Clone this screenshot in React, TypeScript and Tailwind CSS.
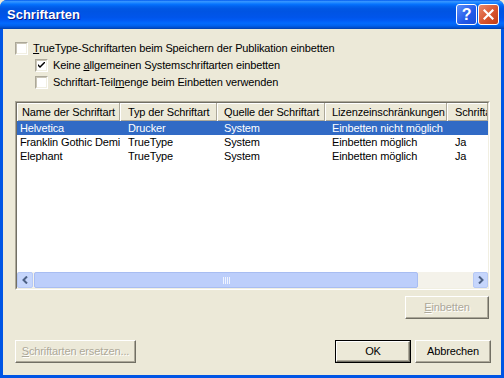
import React from 'react';

const font = "font-['Liberation_Sans',Arial,sans-serif]";

type Row = { name: string; typ: string; quelle: string; lizenz: string; sub: string; selected?: boolean };

const rows: Row[] = [
  { name: 'Helvetica', typ: 'Drucker', quelle: 'System', lizenz: 'Einbetten nicht möglich', sub: '', selected: true },
  { name: 'Franklin Gothic Demi', typ: 'TrueType', quelle: 'System', lizenz: 'Einbetten möglich', sub: 'Ja' },
  { name: 'Elephant', typ: 'TrueType', quelle: 'System', lizenz: 'Einbetten möglich', sub: 'Ja' },
];

const cols = 'grid grid-cols-[103px_97px_108px_122px_minmax(0,1fr)]';

function TitleBar() {
  return (
    <div className="flex h-[29px] shrink-0 items-center bg-[linear-gradient(to_bottom,#0058ee_0%,#3593ff_5%,#288eff_8%,#127dff_12%,#036ffc_16%,#0262ee_22%,#0057e5_30%,#0054e3_40%,#0055eb_60%,#005bf5_70%,#026afe_80%,#0062ef_88%,#0052d6_94%,#0040ab_100%)] pl-[7px] pr-[5px]">
      <span className="text-[13px] font-bold tracking-normal text-white [text-shadow:1px_1px_0_#0a1883]">Schriftarten</span>
      <div className="ml-auto flex gap-[1px]">
        <div className="flex h-[21px] w-[21px] items-center justify-center rounded-[3px] border border-white bg-[linear-gradient(135deg,#5b8ffb,#2158e8_60%,#1a4fd8)]">
          <span className="text-[16px] font-bold leading-none text-white">?</span>
        </div>
        <div className="flex h-[21px] w-[21px] items-center justify-center rounded-[3px] border border-white bg-[linear-gradient(135deg,#e98a6c,#d8542e_55%,#c03d17)]">
          <svg width="11" height="11" viewBox="0 0 11 11">
            <path d="M1.5 1.5 L9.5 9.5 M9.5 1.5 L1.5 9.5" stroke="white" strokeWidth="2.2" strokeLinecap="square" />
          </svg>
        </div>
      </div>
    </div>
  );
}

function CheckBox({ checked, indent, children }: { checked?: boolean; indent?: boolean; children: React.ReactNode }) {
  return (
    <div className={`flex h-[17px] items-center gap-[5px] ${indent ? 'pl-[20px]' : ''}`}>
      <div className="flex h-[13px] w-[13px] items-center justify-center border border-t-[#aca899] border-l-[#aca899] border-r-white border-b-white">
        <div className="flex h-[11px] w-[11px] items-center justify-center border border-t-[#c9c5b6] border-l-[#c9c5b6] border-r-[#f1efe2] border-b-[#f1efe2] bg-white">
          {checked && (
            <svg width="7" height="7" viewBox="0 0 7 7">
              <path d="M0 2 L0 4 L2 6 L7 1 L7 -1 L2 4 Z" fill="black" />
            </svg>
          )}
        </div>
      </div>
      <span>{children}</span>
    </div>
  );
}

function Btn({ children, disabled, primary, w }: { children: React.ReactNode; disabled?: boolean; primary?: boolean; w: string }) {
  const inner = (
    <div
      className={`flex h-full w-full items-center justify-center border border-t-white border-l-white border-r-[#716f64] border-b-[#716f64] shadow-[inset_-1px_-1px_0_#aca899] ${
        disabled ? 'text-[#aca899] [text-shadow:1px_1px_0_#ffffff]' : 'text-black'
      }`}
    >
      {children}
    </div>
  );
  return primary ? (
    <div className={`${w} h-[23px] border border-black`}>{inner}</div>
  ) : (
    <div className={`${w} h-[23px]`}>{inner}</div>
  );
}

function ScrollBar() {
  return (
    <div className="flex h-[16px] shrink-0 items-stretch bg-[#f4f2ea]">
      <div className="flex w-[16px] items-center justify-center rounded-[2px] border border-[#b7c9f5] bg-[#c6d6fc]">
        <svg width="6" height="8" viewBox="0 0 6 8">
          <path d="M5 0.5 L1.5 4 L5 7.5" stroke="#4d6185" strokeWidth="2" fill="none" />
        </svg>
      </div>
      <div className="ml-[1px] flex w-[384px] items-center justify-center rounded-[2px] border border-[#a8bdf2] bg-[#bccefb]">
        <div className="flex gap-[1px]">
          {[0, 1, 2, 3].map((i) => (
            <div key={i} className="h-[7px] w-[1px] bg-[#eef3ff]" />
          ))}
        </div>
      </div>
      <div className="flex-1" />
      <div className="flex w-[15px] items-center justify-center rounded-[2px] border border-[#b7c9f5] bg-[#c6d6fc]">
        <svg width="6" height="8" viewBox="0 0 6 8">
          <path d="M1 0.5 L4.5 4 L1 7.5" stroke="#4d6185" strokeWidth="2" fill="none" />
        </svg>
      </div>
    </div>
  );
}

function FontList() {
  const heads = ['Name der Schriftart', 'Typ der Schriftart', 'Quelle der Schriftart', 'Lizenzeinschränkungen', 'Schriftart-Teilmenge'];
  const pads = ['pl-[5px]', 'pl-[8px]', 'pl-[7px]', 'pl-[7px]', 'pl-[8px]'];
  const bodyPads = ['pl-[3px]', 'pl-[8px]', 'pl-[7px]', 'pl-[7px]', 'pl-[8px]'];
  return (
    <div className="mt-[10px] mr-[1px] flex h-[189px] border border-t-[#aca899] border-l-[#aca899] border-r-white border-b-white">
      <div className="flex min-w-0 flex-1 flex-col overflow-hidden border border-t-[#716f64] border-l-[#716f64] border-r-[#f1efe2] border-b-[#f1efe2] bg-white">
        <div className={`${cols} h-[18px] shrink-0 bg-[#ece9d8] shadow-[inset_0_-1px_0_#aca899]`}>
          {heads.map((h, i) => (
            <div
              key={h}
              className={`flex items-center overflow-hidden whitespace-nowrap border-r border-r-[#aca899] shadow-[inset_1px_1px_0_#ffffff] ${pads[i]}`}
            >
              {h}
            </div>
          ))}
        </div>
        <div className="flex-1">
          {rows.map((r) => (
            <div
              key={r.name}
              className={`${cols} h-[14px] items-center whitespace-nowrap ${r.selected ? 'bg-[#316ac5] text-white' : ''}`}
            >
              {[r.name, r.typ, r.quelle, r.lizenz, r.sub].map((c, i) => (
                <div key={i} className={`overflow-hidden leading-[14px] ${bodyPads[i]}`}>
                  {c}
                </div>
              ))}
            </div>
          ))}
        </div>
        <ScrollBar />
      </div>
    </div>
  );
}

export default function App() {
  return (
    <div className={`h-[378px] w-[504px] bg-[#ece9d8] ${font} text-[11px] tracking-[-0.13px] text-black`}>
      <div className="flex h-full flex-col overflow-hidden rounded-t-[7px] bg-[#0055e5]">
        <TitleBar />
        <div className="mx-[3px] mb-[3px] flex flex-1 flex-col bg-[#ece9d8] pt-[11px] pl-[12px] pr-[10px]">
          <CheckBox>
            <u>T</u>rueType-Schriftarten beim Speichern der Publikation einbetten
          </CheckBox>
          <CheckBox checked indent>
            Keine <u>a</u>llgemeinen Systemschriftarten einbetten
          </CheckBox>
          <CheckBox indent>
            Schriftart-Teil<u>m</u>enge beim Einbetten verwenden
          </CheckBox>
          <FontList />
          <div className="mt-[6px] flex justify-end pr-[2px]">
            <Btn disabled w="w-[84px]">
              <span>
                <u>E</u>inbetten
              </span>
            </Btn>
          </div>
          <div className="mt-[21px] flex items-center">
            <Btn disabled w="w-[121px]">
              <span>
                <u>S</u>chriftarten ersetzen...
              </span>
            </Btn>
            <div className="ml-auto flex gap-[4px]">
              <Btn primary w="w-[76px]">OK</Btn>
              <Btn w="w-[76px]">Abbrechen</Btn>
            </div>
          </div>
        </div>
      </div>
    </div>
  );
}
